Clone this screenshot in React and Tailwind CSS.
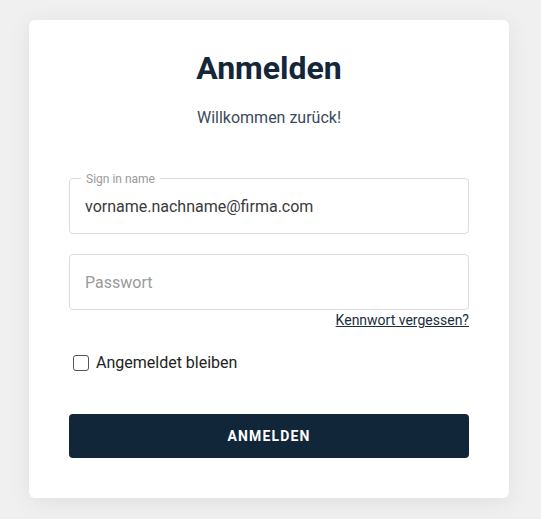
export default function App() {
  return (
    <div
      className="min-h-screen bg-[#eff0ef] px-[29px] pt-5"
      style={{ fontFamily: 'Roboto, "Liberation Sans", sans-serif' }}
    >
      <div className="w-[480px] rounded-md bg-white px-10 pt-[30px] pb-10 shadow-[0_4px_24px_rgba(0,0,0,0.07)]">
        <h1 className="text-center text-[32px] font-bold leading-[36px] text-[#13263a]">
          Anmelden
        </h1>
        <p className="mt-[22px] text-center text-base leading-5 text-[#3b4a5c]">
          Willkommen zurück!
        </p>

        <div className="relative mt-[50px] h-[56px] rounded border border-[#dcdcdc]">
          <span className="absolute -top-[8px] left-[11px] bg-white px-[5px] text-xs leading-4 text-[#9a9a9a]">
            Sign in name
          </span>
          <input
            type="text"
            defaultValue="vorname.nachname@firma.com"
            className="h-full w-full bg-transparent px-[15px] text-base text-[#3a3a3a] outline-none"
          />
        </div>

        <div className="mt-5 h-[56px] rounded border border-[#dcdcdc]">
          <input
            type="password"
            placeholder="Passwort"
            className="h-full w-full bg-transparent px-[15px] text-base text-[#333] placeholder-[#9a9a9a] outline-none"
          />
        </div>

        <div className="mt-[2px] flex justify-end">
          <a href="#" className="text-sm leading-4 text-[#1b2d40] underline">
            Kennwort vergessen?
          </a>
        </div>

        <label className="mt-[25px] flex items-center gap-[7px] pl-1">
          <span className="h-4 w-4 rounded-[3px] border border-[#555]" />
          <span className="text-base leading-5 text-[#222]">Angemeldet bleiben</span>
        </label>

        <button
          type="button"
          className="mt-[41px] h-[44px] w-full rounded bg-[#12263a] text-sm font-bold tracking-[0.08em] text-white"
        >
          ANMELDEN
        </button>
      </div>
    </div>
  );
}
